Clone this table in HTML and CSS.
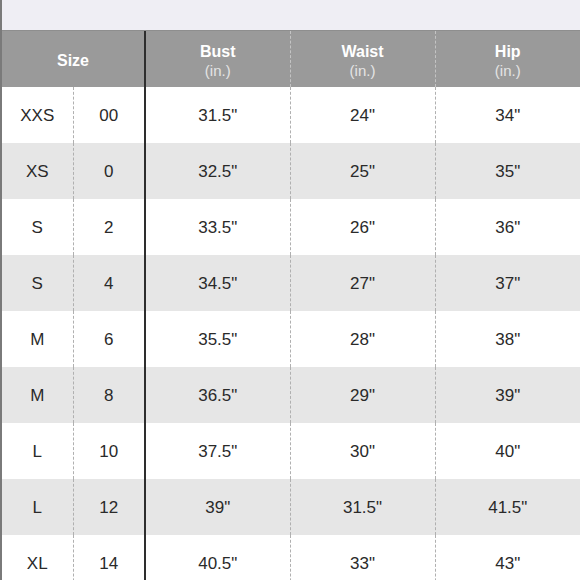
FILE: index.html
```html
<!DOCTYPE html>
<html>
<head>
<meta charset="utf-8">
<link rel="stylesheet" href="styles.css">
</head>
<body>
<div class="page">
  <div class="topband"></div>
  <table class="chart">
    <colgroup>
      <col class="c-letter"><col class="c-num"><col class="c-m"><col class="c-m"><col>
    </colgroup>
    <thead>
      <tr>
        <th colspan="2" class="size-head"><span class="h-title">Size</span></th>
        <th class="meas"><span class="h-title">Bust</span><span class="h-unit">(in.)</span></th>
        <th class="meas"><span class="h-title">Waist</span><span class="h-unit">(in.)</span></th>
        <th class="meas last"><span class="h-title">Hip</span><span class="h-unit">(in.)</span></th>
      </tr>
    </thead>
    <tbody>
      <tr><td class="letter">XXS</td><td class="num">00</td><td>31.5"</td><td>24"</td><td class="last">34"</td></tr>
      <tr class="alt"><td class="letter">XS</td><td class="num">0</td><td>32.5"</td><td>25"</td><td class="last">35"</td></tr>
      <tr><td class="letter">S</td><td class="num">2</td><td>33.5"</td><td>26"</td><td class="last">36"</td></tr>
      <tr class="alt"><td class="letter">S</td><td class="num">4</td><td>34.5"</td><td>27"</td><td class="last">37"</td></tr>
      <tr><td class="letter">M</td><td class="num">6</td><td>35.5"</td><td>28"</td><td class="last">38"</td></tr>
      <tr class="alt"><td class="letter">M</td><td class="num">8</td><td>36.5"</td><td>29"</td><td class="last">39"</td></tr>
      <tr><td class="letter">L</td><td class="num">10</td><td>37.5"</td><td>30"</td><td class="last">40"</td></tr>
      <tr class="alt"><td class="letter">L</td><td class="num">12</td><td>39"</td><td>31.5"</td><td class="last">41.5"</td></tr>
      <tr><td class="letter">XL</td><td class="num">14</td><td>40.5"</td><td>33"</td><td class="last">43"</td></tr>
    </tbody>
  </table>
</div>
</body>
</html>
```

FILE: styles.css
```css
html, body {
  margin: 0;
  padding: 0;
  background: #ffffff;
  overflow: hidden;
}

.page {
  width: 580px;
  height: 580px;
  overflow: hidden;
  box-sizing: border-box;
  border-left: 2px solid #7a7a7a;
  font-family: "Liberation Sans", Arial, sans-serif;
}

.topband {
  height: 31px;
  background: #efeef4;
  border-bottom: 1px solid #8e8e8e;
  box-sizing: border-box;
}

.chart {
  width: 578px;
  border-collapse: collapse;
  table-layout: fixed;
}

.c-letter { width: 71px; }
.c-num { width: 72px; }
.c-m { width: 145px; }

.chart th {
  height: 56px;
  box-sizing: border-box;
  padding: 3px 0 0;
  background: #9a9a9a;
  color: #ffffff;
  text-align: center;
  vertical-align: middle;
  border-right: 1px dashed #c4c4c4;
}

.chart th.size-head {
  border-right: 2px solid #2e2e2e;
}

.chart th.last,
.chart td.last {
  border-right: none;
}

.h-title {
  display: block;
  font-size: 16px;
  font-weight: bold;
  line-height: 20px;
}

.h-unit {
  display: block;
  font-size: 15px;
  line-height: 18px;
  color: #e4e4e4;
  font-weight: normal;
}

.chart td {
  height: 56px;
  box-sizing: border-box;
  padding: 2px 0 0;
  text-align: center;
  vertical-align: middle;
  font-size: 17px;
  color: #2a2a2a;
  border-right: 1px dashed #b0b0b0;
}

.chart td.num {
  border-right: 2px solid #2e2e2e;
}

.chart tr.alt td {
  background: #e6e6e6;
}
```
